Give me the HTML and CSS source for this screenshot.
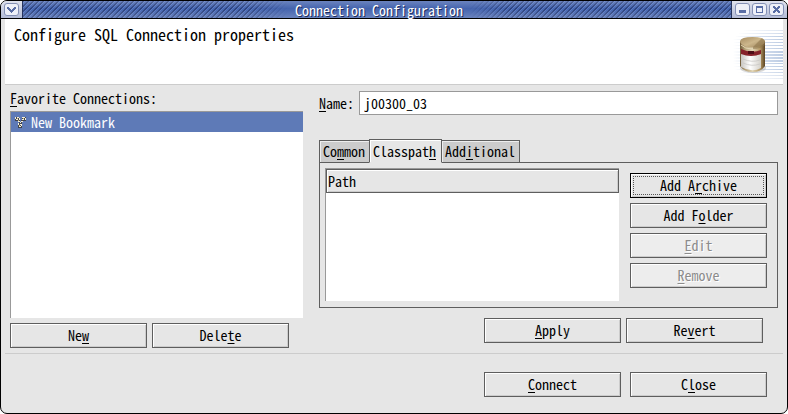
FILE: index.html
```html
<!DOCTYPE html>
<html lang="en">
<head>
    <meta charset="UTF-8">
    <title>Connection Configuration</title>
    <link rel="stylesheet" href="styles.css">
</head>
<body>
    <div class="window">
        <div class="titlebar">
            <div class="caps caps-left">
                <span class="wm-button"><svg width="13" height="11"><path d="M2 3h2v1h1v1h1v1h1v-1h1v-1h1v-1h2v2h-1v1h-1v1h-1v1h-1v1h-1v-1h-1v-1h-1v-1h-1v-1h-1z" fill="#5a6ea5"/></svg></span>
            </div>
            <div class="title">Connection Configuration</div>
            <div class="caps caps-right">
                <span class="wm-button"><svg width="13" height="11"><path d="M3 6h7v3h-7z" fill="#5a6ea5"/></svg></span>
                <span class="wm-button"><svg width="13" height="11"><path d="M3 2h7v7h-7zM4 4v4h5v-4z" fill="#5a6ea5" fill-rule="evenodd"/></svg></span>
                <span class="wm-button"><svg width="13" height="11"><path d="M3 2h2v1h1v1h1v-1h1v-1h2v2h-1v1h-1v1h1v1h1v2h-2v-1h-1v-1h-1v1h-1v1h-2v-2h1v-1h1v-1h-1v-1h-1z" fill="#5a6ea5"/></svg></span>
            </div>
        </div>

        <div class="header">
            <h1>Configure SQL Connection properties</h1>
            <svg class="banner" width="60" height="65" viewBox="0 0 60 65">
                <defs>
                    <linearGradient id="fade"><stop offset="0" stop-color="#c6d4e8" stop-opacity="0"/><stop offset=".65" stop-color="#d0dbec"/><stop offset="1" stop-color="#bccce3"/></linearGradient>
                    <linearGradient id="side"><stop offset="0" stop-color="#6f5b3a"/><stop offset=".2" stop-color="#b5a178"/><stop offset=".5" stop-color="#e0d4b4"/><stop offset=".8" stop-color="#b69a66"/><stop offset="1" stop-color="#594322"/></linearGradient>
                    <linearGradient id="label"><stop offset="0" stop-color="#c8c6c2"/><stop offset=".45" stop-color="#fff"/><stop offset="1" stop-color="#d4d1ca"/></linearGradient>
                    <linearGradient id="lid" x2="1" y2="1"><stop offset="0" stop-color="#a58b60"/><stop offset=".5" stop-color="#cdb78c"/><stop offset="1" stop-color="#9a8055"/></linearGradient>
                    <filter id="soft"><feGaussianBlur stdDeviation=".5"/></filter>
                </defs>
                <g fill="url(#fade)">
                    <rect x="20" y="11" width="40" height="1" opacity=".5"/><rect x="15" y="14" width="45" height="1" opacity=".7"/><rect x="12" y="17" width="48" height="1"/><rect x="10" y="20" width="50" height="1"/><rect x="10" y="23" width="50" height="1"/><rect x="10" y="26" width="50" height="1"/><rect x="10" y="29" width="50" height="1"/><rect x="10" y="32" width="50" height="2"/><rect x="10" y="35" width="50" height="2"/><rect x="10" y="38" width="50" height="2"/><rect x="10" y="41" width="50" height="2"/><rect x="10" y="44" width="50" height="1"/><rect x="10" y="47" width="50" height="1"/><rect x="12" y="50" width="48" height="1"/><rect x="15" y="53" width="45" height="1" opacity=".8"/><rect x="18" y="56" width="42" height="1" opacity=".6"/><rect x="22" y="59" width="38" height="1" opacity=".4"/>
                </g>
                <g filter="url(#soft)">
                    <ellipse cx="30" cy="49" rx="13" ry="5" fill="#999" opacity=".4"/>
                    <path d="M17 22v25q4 6 12.500 6t12.500-6v-25z" fill="url(#side)"/>
                    <path d="M18 34q10 5 20 1v14q-9 5-20-1z" fill="url(#label)"/>
                    <path d="M18 30q11 5 20 1v4q-10 4-20 0z" fill="#86202a"/>
                    <path d="M25 32h6v3h-6z" fill="#4e1014"/>
                    <path d="M20 40q9 4 17 1M20 44q9 4 17 1" fill="none" stroke="#c9c8c5" stroke-width=".8"/>
                    <path d="M17 22q1-4 12.500-4t12.500 4q0 3-5 5-8 3-15 0-5-2-5-5z" fill="url(#lid)"/>
                    <path d="M30 28l9-9 3 3v4q-4 4-12 4z" fill="#8b7349" opacity=".55"/>
                    <path d="M18 26q4 4 11 4" fill="none" stroke="#e5d7b3"/>
                </g>
            </svg>
        </div>

        <div class="main">
            <div class="favorites">
                <div class="label"><u>F</u>avorite Connections:</div>
                <div class="list">
                    <div class="list-row">
                        <svg class="bookmark" width="12" height="12" viewBox="0 0 12 12">
                            <path d="M0 1h4v4h-4zM7 1h4v4h-4zM3 7h4v5h-4zM4 4h1v4h-1zM6 4h1v4h-1z" fill="#41444d"/>
                            <path d="M0 1h1v2h-1zM2 1h2v1h-2zM1 3h2v1h-2zM4 2h1v2h-1zM7 1h3v1h-3zM10 2h1v2h-1zM7 3h2v1h-2zM3 5h2v1h-2zM6 5h2v1h-2zM5 6h1v1h-1zM3 7h1v2h-1zM5 8h2v1h-2zM4 10h2v1h-2zM6 9h1v1h-1z" fill="#f4efda"/>
                            <path d="M2 2h1v1h-1zM8 2h1v1h-1zM4 9h1v1h-1zM3 4h1v1h-1z" fill="#c3b07a"/>
                        </svg>New Bookmark
                    </div>
                </div>
                <div class="buttons">
                    <button>Ne<u>w</u></button>
                    <button>Dele<u>t</u>e</button>
                </div>
            </div>

            <div class="details">
                <div class="name-row">
                    <label for="name"><u>N</u>ame:</label>
                    <input type="text" id="name" value="j00300_03">
                </div>
                <div class="tabs">
                    <div class="tab">Co<u>m</u>mon</div>
                    <div class="tab active">Classpat<u>h</u></div>
                    <div class="tab">Add<u>i</u>tional</div>
                </div>
                <div class="panel">
                    <div class="table">
                        <div class="th">Path</div>
                    </div>
                    <div class="side">
                        <button class="focused">Add A<u>r</u>chive</button>
                        <button>Add F<u>o</u>lder</button>
                        <button disabled><u>E</u>dit</button>
                        <button disabled><u>R</u>emove</button>
                    </div>
                </div>
                <div class="buttons apply">
                    <button><u>A</u>pply</button>
                    <button>Re<u>v</u>ert</button>
                </div>
            </div>
        </div>

        <div class="footer">
            <button><u>C</u>onnect</button>
            <button>C<u>l</u>ose</button>
        </div>
    </div>
</body>
</html>
```

FILE: styles.css
```css
* {
    box-sizing: border-box;
}
body {
    margin: 0;
    background: #fff;
    overflow: hidden;
}
body, button, input {
    font: 14px/20px "Noto Sans CJK JP", "Liberation Mono", monospace;
    font-feature-settings: "hwid", "liga" 0;
    color: #000;
}
svg {
    display: block;
}
u {
    text-decoration: underline;
    text-decoration-thickness: 1px;
    text-underline-offset: 2px;
    text-decoration-skip-ink: none;
}
.window {
    width: 788px;
    height: 414px;
    border: 1px solid #000;
    border-radius: 7px;
    background: #e6e6e6;
    overflow: hidden;
    display: flex;
    flex-direction: column;
}

/* title bar */
.titlebar {
    display: flex;
    height: 18px;
    border-bottom: 1px solid #000;
    flex: none;
}
.caps {
    display: flex;
    align-items: center;
    background: linear-gradient(#dfe2ee, #b3bbd5);
}
.caps-left {
    width: 22px;
    padding-left: 3px;
    border-right: 1px solid #26345f;
}
.caps-right {
    width: 56px;
    gap: 2px;
    padding-left: 3px;
    border-left: 1px solid #26345f;
}
.wm-button {
    border: 1px solid #8490b5;
    border-radius: 3px;
    background: #eef0f8;
}
.title {
    flex: 1;
    color: #fff;
    text-shadow: 1px 1px 0 #1c2c5c;
    line-height: 18px;
    padding-left: 272px;
    background: linear-gradient(rgba(255, 255, 255, .2), transparent 45%, rgba(255, 255, 255, .2)), linear-gradient(90deg, transparent 225px, #4564ae 265px, #4564ae 445px, transparent 485px), repeating-linear-gradient(135deg, #2b427f 0 1px, #5878c0 1px 2px, #4564ae 2px 3.535px);
    white-space: nowrap;
}

/* header */
.header {
    height: 66px;
    margin: 0 4px;
    background: #fff;
    border-bottom: 1px solid #ccc;
    display: flex;
    justify-content: space-between;
    flex: none;
}
h1 {
    margin: 3px 0 0 9px;
    font-size: 16px;
    font-weight: normal;
    line-height: 24px;
}

/* buttons */
button {
    display: block;
    width: 137px;
    height: 25px;
    padding: 0 0 2px;
    border: 1px solid #5e5e5e;
    border-radius: 0;
    background: #e6e6e6;
    box-shadow: inset 1px 1px #fff, inset -1px -1px #ccc;
}
button:disabled {
    color: #8c8c8c;
    background: #ededed;
    text-shadow: 1px 1px #fff;
}
button.focused {
    border-color: #000;
    outline: 1px dotted #555;
    outline-offset: -4px;
}
.buttons {
    display: flex;
    gap: 5px;
}

/* content */
.main {
    display: flex;
    height: 269px;
    margin: 0 4px;
    padding: 6px 5px 0;
    border-bottom: 1px solid #ccc;
    flex: none;
}
.favorites {
    width: 293px;
    margin-right: 16px;
}
.label {
    height: 20px;
    line-height: 15px;
}
.list {
    height: 207px;
    border: solid #999;
    border-width: 1px 0 0 1px;
    background: #fff;
    margin-bottom: 5px;
}
.list-row {
    display: flex;
    height: 20px;
    padding-left: 4px;
    background: #5e7ab7;
    color: #fff;
    line-height: 20px;
}
.bookmark {
    margin: 4px 4px 0 0;
}
.details {
    width: 459px;
}
.name-row {
    display: flex;
    height: 24px;
    line-height: 24px;
}
.name-row label {
    width: 40px;
}
.name-row input {
    flex: 1;
    padding: 0 4px 1px;
    border: 1px solid #999;
    border-radius: 0;
    background: #fff;
}
.tabs {
    display: flex;
    align-items: flex-end;
    margin-top: 24px;
    height: 24px;
}
.tab {
    height: 23px;
    border: 1px solid #5e5e5e;
    background: #ccc;
    box-shadow: inset 1px 1px #eee;
    padding: 0 3px;
    line-height: 20px;
    width: 51px;
    white-space: nowrap;
}
.tab:last-child {
    width: 79px;
}
.tab.active {
    height: 24px;
    width: 73px;
    margin: 0 -1px;
    padding-left: 3px;
    position: relative;
    background: #e6e6e6;
    border-bottom-color: #e6e6e6;
    box-shadow: inset 1px 1px #fff;
    line-height: 22px;
}
.panel {
    display: flex;
    justify-content: space-between;
    height: 146px;
    margin-top: -1px;
    padding: 5px 10px 0 5px;
    border: 1px solid #5e5e5e;
}
.table {
    width: 294px;
    height: 133px;
    border: solid #999;
    border-width: 1px 0 0 1px;
    background: #fff;
}
.th {
    height: 24px;
    border: 1px solid #5e5e5e;
    background: #e6e6e6;
    box-shadow: inset 1px 1px #fff, inset -1px -1px #ccc;
    padding-left: 1px;
    line-height: 22px;
}
.side {
    display: flex;
    flex-direction: column;
    gap: 5px;
    padding-top: 5px;
}
.apply {
    margin: 10px 0 0 165px;
}

/* footer */
.footer {
    display: flex;
    gap: 9px;
    padding: 18px 0 0 483px;
}
```
